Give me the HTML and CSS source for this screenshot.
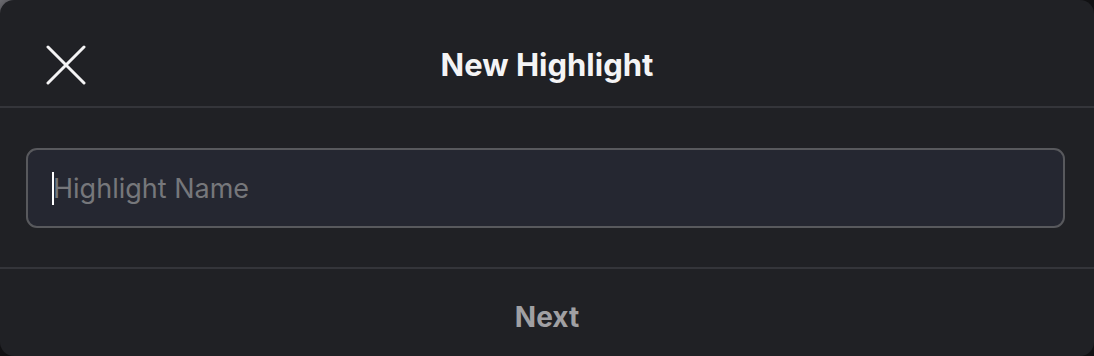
FILE: index.html
```html
<!DOCTYPE html>
<html lang="en">
<head>
    <meta charset="UTF-8">
    <meta name="viewport" content="width=device-width, initial-scale=1.0">
    <title>New Highlight</title>
    <link rel="stylesheet" href="styles.css">
</head>
<body>
    <div class="modal">
        <header class="modal-header">
            <button class="close-btn" aria-label="Close">
                <svg width="40" height="40" viewBox="0 0 40 40">
                    <path d="M2 2 L38 38 M38 2 L2 38" stroke="#f4f4f5" stroke-width="3" stroke-linecap="round" fill="none"/>
                </svg>
            </button>
            <h1>New Highlight</h1>
        </header>
        <div class="modal-body">
            <div class="name-input">
                <span class="caret"></span>
                <span class="placeholder">Highlight Name</span>
            </div>
        </div>
        <footer class="modal-footer">
            <button class="next-btn">Next</button>
        </footer>
    </div>
</body>
</html>
```

FILE: styles.css
```css
html, body {
    margin: 0;
    padding: 0;
    height: 100%;
}
body {
    background: linear-gradient(135deg, #6b6b70 0%, #2a2a2e 3%, #111113 10%);
    font-family: Inter, "Noto Sans", sans-serif;
    overflow: hidden;
}
.modal {
    width: 1094px;
    height: 356px;
    background-color: #202125;
    border-radius: 14px;
    display: flex;
    flex-direction: column;
}
.modal-header {
    box-sizing: border-box;
    height: 108px;
    padding-top: 23px;
    border-bottom: 2px solid #34353a;
    display: flex;
    align-items: center;
    justify-content: center;
    position: relative;
}
.modal-header h1 {
    margin: 0;
    color: #f4f4f5;
    font-size: 31px;
    font-weight: 700;
}
.close-btn {
    position: absolute;
    left: 46px;
    top: 45px;
    width: 40px;
    height: 40px;
    padding: 0;
    border: none;
    background: none;
}
.close-btn svg {
    display: block;
}
.modal-body {
    padding: 40px 29px 39px 26px;
    border-bottom: 2px solid #34353a;
}
.name-input {
    height: 76px;
    border: 2px solid #58595d;
    border-radius: 11px;
    background-color: #252731;
    display: flex;
    align-items: center;
    padding-left: 24px;
}
.caret {
    width: 2px;
    height: 33px;
    background-color: #ffffff;
    margin-right: -1px;
}
.placeholder {
    color: #76777b;
    font-size: 27px;
}
.modal-footer {
    flex: 1;
    display: flex;
    justify-content: center;
    padding-top: 30px;
}
.next-btn {
    border: none;
    background: none;
    color: #a0a0a3;
    font-family: inherit;
    font-size: 28px;
    font-weight: 700;
    padding: 0;
    height: 36px;
}
```
